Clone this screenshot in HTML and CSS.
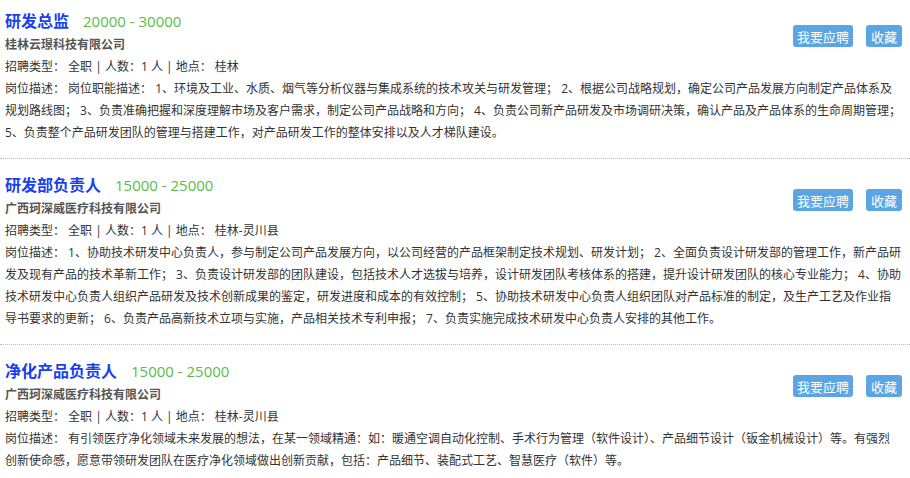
FILE: index.html
```html
<!DOCTYPE html>
<html lang="zh-CN">
<head>
    <meta charset="UTF-8">
    <meta name="viewport" content="width=device-width, initial-scale=1.0">
    <title>招聘信息</title>
    <link rel="stylesheet" href="styles.css">
</head>
<body>
    <div class="job-list">
        <div class="job">
            <div class="job-head">
                <div class="job-info">
                    <div class="job-title"><a href="#">研发总监</a><span class="salary">20000 - 30000</span></div>
                    <div class="company">桂林云璟科技有限公司</div>
                    <div class="meta">招聘类型： 全职 | 人数：1 人 | 地点： 桂林</div>
                </div>
                <div class="job-actions">
                    <button class="btn">我要应聘</button>
                    <button class="btn">收藏</button>
                </div>
            </div>
            <p class="desc">岗位描述： 岗位职能描述： 1、环境及工业、水质、烟气等分析仪器与集成系统的技术攻关与研发管理； 2、根据公司战略规划，确定公司产品发展方向制定产品体系及规划路线图； 3、负责准确把握和深度理解市场及客户需求，制定公司产品战略和方向； 4、负责公司新产品研发及市场调研决策，确认产品及产品体系的生命周期管理； 5、负责整个产品研发团队的管理与搭建工作，对产品研发工作的整体安排以及人才梯队建设。</p>
        </div>

        <div class="job">
            <div class="job-head">
                <div class="job-info">
                    <div class="job-title"><a href="#">研发部负责人</a><span class="salary">15000 - 25000</span></div>
                    <div class="company">广西珂深威医疗科技有限公司</div>
                    <div class="meta">招聘类型： 全职 | 人数：1 人 | 地点： 桂林-灵川县</div>
                </div>
                <div class="job-actions">
                    <button class="btn">我要应聘</button>
                    <button class="btn">收藏</button>
                </div>
            </div>
            <p class="desc">岗位描述： 1、协助技术研发中心负责人，参与制定公司产品发展方向，以公司经营的产品框架制定技术规划、研发计划； 2、全面负责设计研发部的管理工作，新产品研发及现有产品的技术革新工作； 3、负责设计研发部的团队建设，包括技术人才选拔与培养，设计研发团队考核体系的搭建，提升设计研发团队的核心专业能力； 4、协助技术研发中心负责人组织产品研发及技术创新成果的鉴定，研发进度和成本的有效控制； 5、协助技术研发中心负责人组织团队对产品标准的制定，及生产工艺及作业指导书要求的更新； 6、负责产品高新技术立项与实施，产品相关技术专利申报； 7、负责实施完成技术研发中心负责人安排的其他工作。</p>
        </div>

        <div class="job">
            <div class="job-head">
                <div class="job-info">
                    <div class="job-title"><a href="#">净化产品负责人</a><span class="salary">15000 - 25000</span></div>
                    <div class="company">广西珂深威医疗科技有限公司</div>
                    <div class="meta">招聘类型： 全职 | 人数：1 人 | 地点： 桂林-灵川县</div>
                </div>
                <div class="job-actions">
                    <button class="btn">我要应聘</button>
                    <button class="btn">收藏</button>
                </div>
            </div>
            <p class="desc">岗位描述： 有引领医疗净化领域未来发展的想法，在某一领域精通：如：暖通空调自动化控制、手术行为管理（软件设计）、产品细节设计（钣金机械设计）等。有强烈创新使命感，愿意带领研发团队在医疗净化领域做出创新贡献，包括：产品细节、装配式工艺、智慧医疗（软件）等。</p>
        </div>
    </div>
</body>
</html>
```

FILE: styles.css
```css
body {
    margin: 0;
    font-family: "Open Sans", "Noto Sans CJK SC", sans-serif;
    font-size: 12px;
    color: #333;
    background: #fff;
}
.job {
    padding: 15px 8px 14px 5px;
    border-bottom: 1px dotted #bbb;
}
.job:first-child {
    padding-top: 10px;
}
.job-head {
    display: flex;
    justify-content: space-between;
    align-items: flex-start;
}
.job-title {
    line-height: 23px;
    height: 23px;
}
.job-title a {
    font-size: 16px;
    font-weight: bold;
    color: #1a3ff0;
    text-decoration: none;
}
.salary {
    margin-left: 14px;
    font-size: 15px;
    color: #5cbb4a;
}
.company {
    line-height: 23px;
    font-weight: bold;
    color: #555;
}
.meta {
    line-height: 22px;
}
.job-actions {
    display: flex;
    gap: 13px;
    margin-top: 15px;
}
.btn {
    height: 22px;
    min-width: 36px;
    padding: 0 4px;
    border: none;
    border-radius: 3px;
    background-color: #5ba5e4;
    color: #fff;
    font-family: inherit;
    font-size: 13px;
    cursor: pointer;
}
.btn:hover {
    background-color: #3d8fd6;
}
.desc {
    margin: 0;
    line-height: 22px;
}
```
